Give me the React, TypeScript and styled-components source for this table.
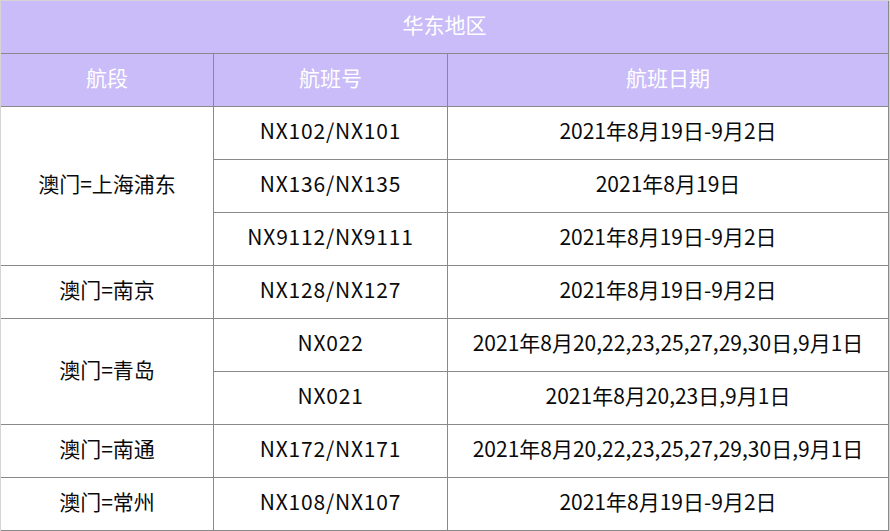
import React from "react";
import styled, { createGlobalStyle } from "styled-components";

const Global = createGlobalStyle`
  html, body { margin: 0; padding: 0; background: #fff; }
  body { font-family: "Noto Sans CJK SC", "Noto Sans", sans-serif; }
`;

const Frame = styled.div`
  width: 890px;
  height: 531px;
  box-sizing: border-box;
  border-top: 1px solid #d4d4d4;
  border-left: 1px solid #d4d4d4;
  border-right: 1px solid #d4d4d4;
`;

const Grid = styled.div`
  width: 888px;
  box-sizing: border-box;
  display: grid;
  grid-template-columns: 212px 233px 440px;
  grid-auto-rows: 52px;
  gap: 1px;
  padding: 0 1px 1px 0;
  background: #898989;
`;

const Cell = styled.div<{ $head?: boolean; $span?: number; $cols?: number; $col?: number }>`
  display: flex;
  align-items: center;
  justify-content: center;
  box-sizing: border-box;
  padding-bottom: 5px;
  background: ${(p) => (p.$head ? "#c9bcf8" : "#ffffff")};
  color: ${(p) => (p.$head ? "#ffffff" : "#0a0a0a")};
  font-size: 21px;
  line-height: 1;
  white-space: nowrap;
  ${(p) => (p.$span ? `grid-row: span ${p.$span};` : "")}
  ${(p) => (p.$cols ? `grid-column: span ${p.$cols};` : "")}
  ${(p) => (p.$col ? `grid-column: ${p.$col};` : "")}
`;

const FlightNo = styled.span`
  letter-spacing: 0.8px;
`;

type Group = { route: string; flights: { no: string; date: string }[] };

const groups: Group[] = [
  {
    route: "澳门=上海浦东",
    flights: [
      { no: "NX102/NX101", date: "2021年8月19日-9月2日" },
      { no: "NX136/NX135", date: "2021年8月19日" },
      { no: "NX9112/NX9111", date: "2021年8月19日-9月2日" },
    ],
  },
  { route: "澳门=南京", flights: [{ no: "NX128/NX127", date: "2021年8月19日-9月2日" }] },
  {
    route: "澳门=青岛",
    flights: [
      { no: "NX022", date: "2021年8月20,22,23,25,27,29,30日,9月1日" },
      { no: "NX021", date: "2021年8月20,23日,9月1日" },
    ],
  },
  { route: "澳门=南通", flights: [{ no: "NX172/NX171", date: "2021年8月20,22,23,25,27,29,30日,9月1日" }] },
  { route: "澳门=常州", flights: [{ no: "NX108/NX107", date: "2021年8月19日-9月2日" }] },
];

export default function App() {
  return (
    <>
      <Global />
      <Frame>
        <Grid>
          <Cell $head $cols={3}>华东地区</Cell>
          <Cell $head>航段</Cell>
          <Cell $head>航班号</Cell>
          <Cell $head>航班日期</Cell>
          {groups.map((g) => (
            <React.Fragment key={g.route}>
              <Cell $span={g.flights.length}>{g.route}</Cell>
              {g.flights.map((f, i) => (
                <React.Fragment key={f.no + i}>
                  <Cell $col={i > 0 ? 2 : undefined}>
                    <FlightNo>{f.no}</FlightNo>
                  </Cell>
                  <Cell>{f.date}</Cell>
                </React.Fragment>
              ))}
            </React.Fragment>
          ))}
        </Grid>
      </Frame>
    </>
  );
}
